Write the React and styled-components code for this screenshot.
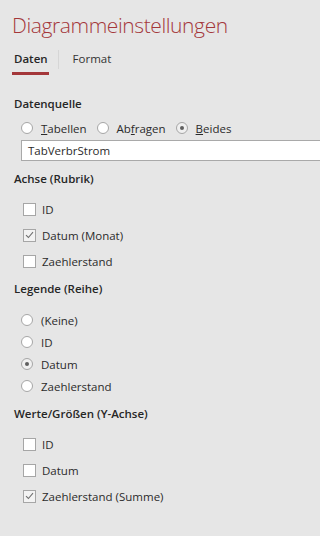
import styled, { createGlobalStyle } from "styled-components";

const GlobalStyle = createGlobalStyle`
  html, body {
    margin: 0;
    padding: 0;
    background: #e6e6e6;
    overflow: hidden;
  }
  body {
    font-family: "Open Sans", "Noto Sans", sans-serif;
    color: #2b2b2b;
  }
`;

const Panel = styled.div`
  width: 100%;
  height: 536px;
  display: flex;
  flex-direction: column;
  padding-left: 12px;
  box-sizing: border-box;
  overflow: hidden;
`;

const Title = styled.h1`
  margin: 8px 0 0;
  height: 34px;
  line-height: 34px;
  font-size: 21px;
  font-weight: 300;
  letter-spacing: -0.4px;
  color: #a4373a;
  white-space: nowrap;
`;

const TabBar = styled.div`
  display: flex;
  align-items: flex-start;
`;

const Tab = styled.div`
  padding: 8px 0 4px;
  font-size: 11.5px;
  line-height: 18px;
  font-weight: ${(p) => (p.$active ? 600 : 400)};
  color: ${(p) => (p.$active ? "#262626" : "#333")};
  border-bottom: 3px solid ${(p) => (p.$active ? "#a4373a" : "transparent")};
`;

const TabLabel = styled.span`
  display: block;
  padding: 0 1px 0 2px;
`;

const TabDivider = styled.div`
  width: 1px;
  height: 19px;
  margin: 8px 12px 0 9px;
  background: #d6d6d6;
`;

const SectionHeading = styled.div`
  margin-top: ${(p) => p.$top}px;
  margin-left: 2px;
  height: 20px;
  line-height: 20px;
  font-size: 11.5px;
  font-weight: 600;
  color: #262626;
`;

const InlineOptions = styled.div`
  margin-top: 4px;
  height: 20px;
  display: flex;
  align-items: center;
  padding-left: 9px;
  gap: 10px;
`;

const OptionList = styled.div`
  margin-top: ${(p) => p.$top}px;
  display: flex;
  flex-direction: column;
`;

const Option = styled.label`
  display: flex;
  align-items: center;
  height: ${(p) => p.$h}px;
  padding-left: ${(p) => (p.$inline ? 0 : 9)}px;
  font-size: 11.5px;
  color: #2b2b2b;
  white-space: nowrap;
`;

const RadioCircle = styled.span`
  width: 12px;
  height: 12px;
  box-sizing: border-box;
  border-radius: 50%;
  border: 1px solid #a6a6a6;
  background: ${(p) => (p.$checked ? "#f0f0f0" : "#fff")};
  display: flex;
  align-items: center;
  justify-content: center;
  margin-right: 8px;
  flex-shrink: 0;
  &::after {
    content: "";
    width: 4px;
    height: 4px;
    border-radius: 50%;
    background: #5f5f5f;
    display: ${(p) => (p.$checked ? "block" : "none")};
  }
`;

const CheckBox = styled.span`
  width: 13px;
  height: 13px;
  box-sizing: border-box;
  border: 1px solid #a6a6a6;
  background: ${(p) => (p.$checked ? "#f3f3f3" : "#fff")};
  margin-left: 2px;
  margin-right: 6px;
  flex-shrink: 0;
  display: flex;
  align-items: center;
  justify-content: center;
`;

const SourceInput = styled.div`
  margin-top: 2px;
  margin-left: 9px;
  height: 21px;
  box-sizing: border-box;
  border: 1px solid #a9a9a9;
  border-right: none;
  background: #fff;
  padding-left: 6px;
  font-size: 11.5px;
  line-height: 19px;
  color: #2b2b2b;
`;

const Radio = ({ checked, children, h = 22, inline }) => (
  <Option $h={h} $inline={inline}>
    <RadioCircle $checked={checked} />
    {children}
  </Option>
);

const Check = ({ checked, children }) => (
  <Option $h={26}>
    <CheckBox $checked={checked}>
      {checked && (
        <svg width="9" height="8" viewBox="0 0 9 8">
          <polyline
            points="1,4.2 3.4,6.5 8,1.2"
            fill="none"
            stroke="#707070"
            strokeWidth="1.1"
          />
        </svg>
      )}
    </CheckBox>
    {children}
  </Option>
);

export default function App() {
  return (
    <>
      <GlobalStyle />
      <Panel>
        <Title>Diagrammeinstellungen</Title>
        <TabBar>
          <Tab $active>
            <TabLabel>Daten</TabLabel>
          </Tab>
          <TabDivider />
          <Tab>
            <TabLabel>Format</TabLabel>
          </Tab>
        </TabBar>

        <SectionHeading $top={19}>Datenquelle</SectionHeading>
        <InlineOptions>
          <Radio inline h={20}>
            <u>T</u>abellen
          </Radio>
          <Radio inline h={20}>
            Ab<u>f</u>ragen
          </Radio>
          <Radio inline h={20} checked>
            <u>B</u>eides
          </Radio>
        </InlineOptions>
        <SourceInput>TabVerbrStrom</SourceInput>

        <SectionHeading $top={8}>Achse (Rubrik)</SectionHeading>
        <OptionList $top={7}>
          <Check>ID</Check>
          <Check checked>Datum (Monat)</Check>
          <Check>Zaehlerstand</Check>
        </OptionList>

        <SectionHeading $top={5}>Legende (Reihe)</SectionHeading>
        <OptionList $top={10}>
          <Radio>(Keine)</Radio>
          <Radio>ID</Radio>
          <Radio checked>Datum</Radio>
          <Radio>Zaehlerstand</Radio>
        </OptionList>

        <SectionHeading $top={7}>Werte/Größen (Y-Achse)</SectionHeading>
        <OptionList $top={7}>
          <Check>ID</Check>
          <Check>Datum</Check>
          <Check checked>Zaehlerstand (Summe)</Check>
        </OptionList>
      </Panel>
    </>
  );
}
